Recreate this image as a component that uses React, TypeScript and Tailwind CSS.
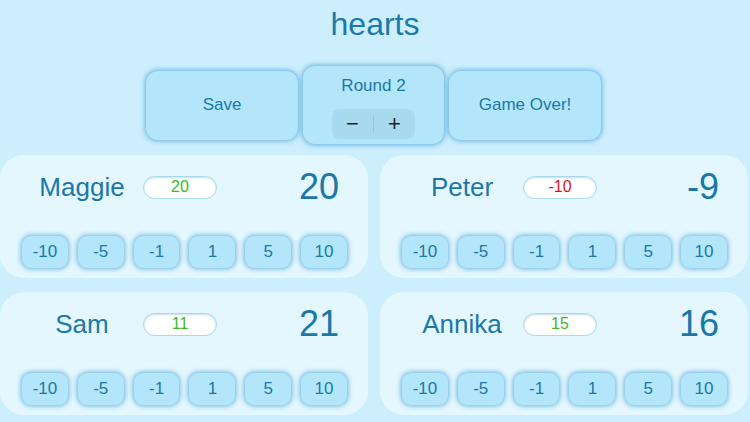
import React from 'react'

interface Player {
  name: string
  round: number
  total: number
}

const players: Player[] = [
  { name: 'Maggie', round: 20, total: 20 },
  { name: 'Peter', round: -10, total: -9 },
  { name: 'Sam', round: 11, total: 21 },
  { name: 'Annika', round: 15, total: 16 },
]

const steps = [-10, -5, -1, 1, 5, 10]

const glow = 'bg-[#b4e6fb] shadow-[0_0_5px_1px_rgba(60,155,210,0.75)]'

function PlayerCard({ player }: { player: Player }) {
  return (
    <div className="h-[123px] rounded-[24px] bg-[#e4f7fe] pl-[21px] pr-[21px] pt-[15px] flex flex-col">
      {/* Name, round score, total */}
      <div className="flex items-center h-[34px]">
        <span className="w-[122px] text-center text-[26px] text-[#1a78a8]">{player.name}</span>
        <div className="w-[74px] h-[23px] rounded-full bg-white border border-[#a6d8ee] shadow-[inset_0_1px_2px_rgba(80,160,200,0.35)] flex items-center justify-center">
          <span className={`text-[16px] ${player.round < 0 ? 'text-[#d9141a]' : 'text-[#3bbb22]'}`}>
            {player.round}
          </span>
        </div>
        <span className="flex-1 text-right pr-[8px] text-[36px] text-[#1a78a8]">{player.total}</span>
      </div>

      {/* Score buttons */}
      <div className="mt-[32px] flex gap-[10px] pl-px">
        {steps.map((s) => (
          <button
            key={s}
            className={`w-[46px] h-[32px] rounded-[9px] ${glow} text-[17px] text-[#1a78a8] flex items-center justify-center`}
          >
            {s}
          </button>
        ))}
      </div>
    </div>
  )
}

export default function App() {
  return (
    <div
      className="w-[750px] h-[422px] bg-[#cceefd] overflow-hidden flex flex-col"
      style={{ fontFamily: '"Liberation Sans", Arial, sans-serif' }}
    >
      {/* Title */}
      <div className="h-[66px] flex justify-center">
        <span className="text-[32px] text-[#1a7aab]">hearts</span>
      </div>

      {/* Controls */}
      <div className="flex justify-center items-center gap-[5px] h-[78px] pr-[3px]">
        <button className={`w-[152px] h-[69px] rounded-[12px] ${glow} text-[17px] text-[#1a78a8]`}>Save</button>
        <div className={`w-[141px] h-[78px] rounded-[12px] ${glow} flex flex-col items-center pt-[7px]`}>
          <span className="text-[17px] text-[#1a78a8]">Round 2</span>
          <div className="mt-[10px] w-[83px] h-[30px] rounded-[8px] bg-[#a8daef] flex items-center">
            <span className="flex-1 text-center text-[22px] leading-none text-[#222]">−</span>
            <span className="w-px h-[18px] bg-[#93c6dc]"></span>
            <span className="flex-1 text-center text-[22px] leading-none text-[#222]">+</span>
          </div>
        </div>
        <button className={`w-[152px] h-[69px] rounded-[12px] ${glow} text-[17px] text-[#1a78a8]`}>Game Over!</button>
      </div>

      {/* Players */}
      <div className="mt-[11px] pr-[2px] grid grid-cols-2 gap-x-[12px] gap-y-[14px]">
        {players.map((p) => (
          <PlayerCard key={p.name} player={p} />
        ))}
      </div>
    </div>
  )
}
